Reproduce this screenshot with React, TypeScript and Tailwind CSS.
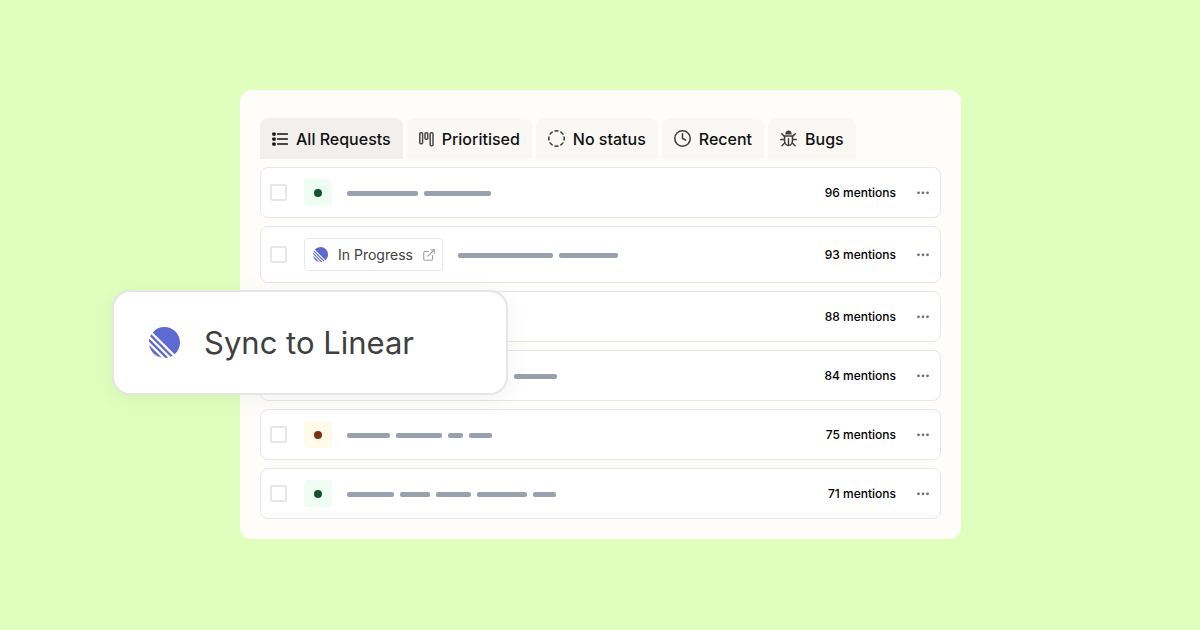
import { useState } from 'react';
import { CircleDashed, Clock, ExternalLink } from 'lucide-react';

function ListIcon() {
  return (
    <svg className="w-4 h-4 shrink-0" viewBox="0 0 16 16" fill="none">
      <g fill="#111111">
        <rect x="0.3" y="1.4" width="3.4" height="3.4" rx="0.8" />
        <rect x="0.3" y="6.4" width="3.4" height="3.4" rx="0.8" />
        <rect x="0.3" y="11.4" width="3.4" height="3.4" rx="0.8" />
      </g>
      <path d="M5.6 3H15.4M5.6 8H15.4M5.6 13H15.4" stroke="#111111" strokeWidth="1.4" strokeLinecap="round" />
    </svg>
  );
}

function BoardIcon() {
  return (
    <svg className="w-[15px] h-4 shrink-0" viewBox="0 0 15 16" fill="none" stroke="#4a4a4a" strokeWidth="1.5">
      <rect x="0.8" y="1.7" width="2.8" height="11" rx="1" />
      <rect x="6" y="1.7" width="2.8" height="6.6" rx="1" />
      <rect x="11.2" y="1.7" width="2.8" height="13" rx="1" />
    </svg>
  );
}

function BugIcon() {
  return (
    <svg className="w-[17px] h-[17px] shrink-0" viewBox="0 0 16 16" fill="none" stroke="#404040" strokeWidth="1.4" strokeLinecap="round">
      <path d="M5 4.2a3 3.8 0 0 1 6 0z" fill="#404040" stroke="none" />
      <path d="M4.3 5.7h7.4v4.6a3.7 4.2 0 0 1-7.4 0z" strokeLinejoin="round" />
      <path d="M8 8.2v6M4.2 6 1.6 3.6M11.8 6l2.6-2.4M4 9H.7M12 9h3.3M4.6 12l-2.8 2.8M11.4 12l2.8 2.8" />
    </svg>
  );
}

function LinearLogo({ className }: { className: string }) {
  return (
    <svg className={className} viewBox="0 0 24 24" fill="#5e6ad2">
      <path d="M2.886 4.18A11.982 11.982 0 0 1 11.99 0C18.624 0 24 5.376 24 12.009c0 3.64-1.62 6.903-4.18 9.105L2.887 4.18ZM1.817 5.626l16.556 16.556c-.524.33-1.075.62-1.65.866L.951 7.277c.247-.575.537-1.126.866-1.65ZM.322 9.163l14.515 14.515c-.71.172-1.443.282-2.195.322L0 11.358a12 12 0 0 1 .322-2.195Zm-.17 4.862 9.823 9.824a12.02 12.02 0 0 1-9.824-9.824Z" />
    </svg>
  );
}

const TABS = [
  { label: 'All Requests', icon: <ListIcon /> },
  { label: 'Prioritised', icon: <BoardIcon /> },
  { label: 'No status', icon: <CircleDashed className="w-[17px] h-[17px] shrink-0 text-neutral-700" viewBox="1 1 22 22" /> },
  { label: 'Recent', icon: <Clock className="w-[17px] h-[17px] shrink-0 text-neutral-700" viewBox="1 1 22 22" /> },
  { label: 'Bugs', icon: <BugIcon /> },
];

// bars: placeholder word widths in px
const REQUESTS = [
  { mentions: 96, status: 'green', bars: [71, 67] },
  { mentions: 93, status: 'linear', bars: [95, 59] },
  { mentions: 88, status: 'green', bars: [47, 67] },
  { mentions: 84, status: 'amber', bars: [55, 47, 47, 43] },
  { mentions: 75, status: 'amber', bars: [43, 46, 15, 23] },
  { mentions: 71, status: 'green', bars: [47, 30, 35, 50, 23] },
];

function Status({ status }: { status: string }) {
  if (status === 'linear') {
    return (
      <a href="#linear" className="flex h-[33px] items-center rounded border border-gray-200 pl-2 pr-1.5 text-[#404040]">
        <LinearLogo className="w-[15px] h-[15px]" />
        <span className="ml-[10px] text-sm">In Progress</span>
        <ExternalLink className="ml-[9px] w-[14px] h-[14px] text-neutral-400" />
      </a>
    );
  }
  return (
    <span
      className={`flex w-7 h-[27px] items-center justify-center rounded ${
        status === 'green' ? 'bg-green-50' : 'bg-amber-50'
      }`}
    >
      <span className={`w-2 h-2 rounded-full ${status === 'green' ? 'bg-[#14532d]' : 'bg-[#78350f]'}`} />
    </span>
  );
}

export default function App() {
  const [active, setActive] = useState('All Requests');

  return (
    <main className="flex min-h-screen items-center justify-center bg-[#e0ffbe] pb-px pl-px font-['Inter',sans-serif]">
      <section className="relative w-full max-w-[721px] rounded-xl bg-[#fffdf9] px-5 pt-7 pb-5">
        {/* Tabs */}
        <nav className="flex gap-1">
          {TABS.map((tab) => (
            <button
              key={tab.label}
              type="button"
              onClick={() => setActive(tab.label)}
              className={`flex h-[41px] items-center gap-2 rounded-t-lg px-3 text-base font-medium text-[#111111] ${
                tab.label === active ? 'bg-[#f1f0ec]' : 'bg-[#f9f8f5]'
              }`}
            >
              {tab.icon}
              {tab.label}
            </button>
          ))}
        </nav>

        {/* Requests */}
        <ul className="mt-2 flex flex-col gap-2">
          {REQUESTS.map((request) => (
            <li
              key={request.mentions}
              className="flex items-center rounded-lg border border-gray-200 bg-white py-[11px] pl-[9px] pr-[11px]"
            >
              <input
                type="checkbox"
                aria-label={`Select request with ${request.mentions} mentions`}
                className="mr-[17px] w-[17px] h-[17px] shrink-0 appearance-none rounded-xs border-2 border-gray-200 bg-white checked:bg-[#5e6ad2]"
              />
              <Status status={request.status} />
              <div className="flex flex-1 gap-[6px] pt-0.5 pl-[15px]">
                {request.bars.map((width, i) => (
                  <span key={i} className="h-[5px] rounded-xs bg-gray-400" style={{ width }} />
                ))}
              </div>
              <div className="flex items-center gap-[21px]">
                <span className="text-xs font-medium text-black">{request.mentions} mentions</span>
                <button type="button" aria-label="More" className="text-gray-500">
                  <svg className="w-3 h-3" viewBox="0 0 12 12" fill="currentColor">
                    <circle cx="1.5" cy="5.8" r="1.4" />
                    <circle cx="6" cy="5.8" r="1.4" />
                    <circle cx="10.5" cy="5.8" r="1.4" />
                  </svg>
                </button>
              </div>
            </li>
          ))}
        </ul>

        {/* Sync popover */}
        <button
          type="button"
          className="absolute -left-32 top-[200px] flex w-[396px] h-[105px] items-center gap-6 rounded-[18px] border-2 border-[#e5e5e5] bg-white pl-[35px] text-[31px] text-[#404040] shadow-[0_4px_24px_rgba(0,0,0,0.05)]"
        >
          <LinearLogo className="w-[31px] h-[31px]" />
          <span className="pt-0.5">Sync to Linear</span>
        </button>
      </section>
    </main>
  );
}
